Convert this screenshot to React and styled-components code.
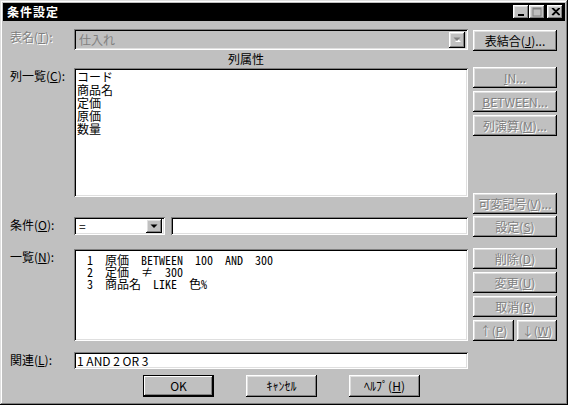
import React from "react";
import styled, { createGlobalStyle } from "styled-components";

const GlobalStyle = createGlobalStyle`
  html, body {
    margin: 0;
    padding: 0;
    background: #ffffff;
  }
  body {
    font-family: "Noto Sans CJK JP", "Noto Sans", sans-serif;
    font-size: 12px;
    color: #000;
  }
`;

const raised = `
  box-shadow: inset -1px -1px #000000, inset 1px 1px #ffffff,
    inset -2px -2px #808080, inset 2px 2px #dfdfdf;
`;

const sunken = `
  box-shadow: inset 1px 1px #808080, inset -1px -1px #ffffff,
    inset 2px 2px #000000, inset -2px -2px #dfdfdf;
`;

function TitleIcon({ kind }) {
  if (kind === "min") {
    return (
      <svg width="8" height="8" viewBox="0 0 8 8">
        <rect x="1" y="6" width="6" height="2" fill="#000" />
      </svg>
    );
  }
  if (kind === "max") {
    return (
      <svg width="10" height="10" viewBox="0 0 10 10">
        <rect x="1" y="1" width="8" height="8" fill="none" stroke="#808080" strokeWidth="1" />
        <rect x="1" y="1" width="8" height="1.5" fill="#808080" />
        <path d="M2 10.5 H10.5 V2" fill="none" stroke="#fff" strokeWidth="1" />
      </svg>
    );
  }
  return (
    <svg width="9" height="8" viewBox="0 0 9 8">
      <path d="M1 0 L8 7 M2 0 L9 7 M8 0 L1 7 M9 0 L2 7" stroke="#000" strokeWidth="1.2" />
    </svg>
  );
}

function Arrow({ disabled }) {
  return (
    <svg width="8" height="5" viewBox="0 0 8 5">
      {disabled && <path d="M2 5 L5 2 L8 5 Z" fill="#fff" />}
      <path d="M0.5 0.5 H7.5 L4 4 Z" fill={disabled ? "#808080" : "#000"} />
    </svg>
  );
}

export default function App() {
  return (
    <>
      <GlobalStyle />
      <Window>
        <TitleBar>
          <Title>条件設定</Title>
          <TitleButton>
            <TitleIcon kind="min" />
          </TitleButton>
          <TitleButton>
            <TitleIcon kind="max" />
          </TitleButton>
          <TitleButton $gap={2}>
            <TitleIcon kind="close" />
          </TitleButton>
        </TitleBar>

        <Body>
          <LeftColumn>
            <Row $h={21}>
              <Label $disabled>
                表名(<u>T</u>):
              </Label>
              <Combo $w={394} $disabled>
                <ComboText $disabled>仕入れ</ComboText>
                <DropButton $h={16}>
                  <Arrow disabled />
                </DropButton>
              </Combo>
            </Row>

            <Header>列属性</Header>

            <Row $h={129}>
              <Label>
                列一覧(<u>C</u>):
              </Label>
              <ListBox $w={394}>
                <ListLine>コード</ListLine>
                <ListLine>商品名</ListLine>
                <ListLine>定価</ListLine>
                <ListLine>原価</ListLine>
                <ListLine>数量</ListLine>
              </ListBox>
            </Row>

            <Row $h={18} $mt={20}>
              <Label>
                条件(<u>O</u>):
              </Label>
              <Combo $w={91}>
                <ComboText>=</ComboText>
                <DropButton $h={14}>
                  <Arrow />
                </DropButton>
              </Combo>
              <TextField $w={297} $ml={6} />
            </Row>

            <Row $h={92} $mt={14}>
              <Label>
                一覧(<u>N</u>):
              </Label>
              <ListBox $w={394}>
                <CondLine>{"1  原価  BETWEEN  100  AND  300"}</CondLine>
                <CondLine>{"2  定価  ≠  300"}</CondLine>
                <CondLine>{"3  商品名  LIKE  色%"}</CondLine>
              </ListBox>
            </Row>

            <Row $h={17} $mt={11}>
              <Label>
                関連(<u>L</u>):
              </Label>
              <TextField $w={394}>
                <FieldText>1 AND 2 OR 3</FieldText>
              </TextField>
            </Row>

            <ButtonRow>
              <DialogButton $default>OK</DialogButton>
              <DialogButton>ｷｬﾝｾﾙ</DialogButton>
              <DialogButton>
                ﾍﾙﾌﾟ(<u>H</u>)
              </DialogButton>
            </ButtonRow>
          </LeftColumn>

          <RightColumn>
            <SideButton $mt={1}>
              表結合(<u>J</u>)...
            </SideButton>
            <SideButton $mt={16} $disabled>
              <u>I</u>N...
            </SideButton>
            <SideButton $mt={3} $disabled>
              <u>B</u>ETWEEN...
            </SideButton>
            <SideButton $mt={3} $disabled>
              列演算(<u>M</u>)...
            </SideButton>
            <SideButton $mt={57} $disabled>
              可変記号(<u>V</u>)...
            </SideButton>
            <SideButton $mt={2} $disabled>
              設定(<u>S</u>)
            </SideButton>
            <SideButton $mt={11} $disabled>
              削除(<u>D</u>)
            </SideButton>
            <SideButton $mt={3} $disabled>
              変更(<u>U</u>)
            </SideButton>
            <SideButton $mt={3} $disabled>
              取消(<u>R</u>)
            </SideButton>
            <ArrowRow>
              <SideButton $w={41} $disabled>
                ↑(<u>P</u>)
              </SideButton>
              <SideButton $w={40} $disabled>
                ↓(<u>W</u>)
              </SideButton>
            </ArrowRow>
          </RightColumn>
        </Body>
      </Window>
    </>
  );
}

const Window = styled.div`
  width: 568px;
  height: 405px;
  box-sizing: border-box;
  padding: 3px;
  background: #c0c0c0;
  box-shadow: inset -1px -1px #000000, inset 1px 1px #dfdfdf,
    inset -2px -2px #808080, inset 2px 2px #ffffff;
  display: flex;
  flex-direction: column;
`;

const TitleBar = styled.div`
  height: 18px;
  background: #000000;
  display: flex;
  align-items: center;
  padding: 0 2px 0 4px;
`;

const Title = styled.span`
  flex: 1;
  color: #ffffff;
  font-size: 12px;
  font-weight: bold;
  line-height: 18px;
  letter-spacing: 1px;
`;

const TitleButton = styled.div`
  width: 16px;
  height: 14px;
  margin-left: ${(p) => p.$gap || 0}px;
  background: #c0c0c0;
  ${raised}
  display: flex;
  align-items: center;
  justify-content: center;
`;

const Body = styled.div`
  display: flex;
  padding: 8px 0 0 7px;
`;

const LeftColumn = styled.div`
  display: flex;
  flex-direction: column;
  width: 458px;
`;

const RightColumn = styled.div`
  display: flex;
  flex-direction: column;
  width: 84px;
  margin-left: 5px;
`;

const Row = styled.div`
  display: flex;
  align-items: flex-start;
  height: ${(p) => p.$h}px;
  margin-top: ${(p) => p.$mt || 0}px;
`;

const Label = styled.div`
  width: 64px;
  flex: none;
  padding-top: 1px;
  line-height: 14px;
  white-space: nowrap;
  color: ${(p) => (p.$disabled ? "#808080" : "#000")};
  text-shadow: ${(p) => (p.$disabled ? "1px 1px 0 #ffffff" : "none")};
`;

const Header = styled.div`
  height: 18px;
  padding-left: 218px;
  line-height: 18px;
`;

const Combo = styled.div`
  width: ${(p) => p.$w}px;
  height: 100%;
  box-sizing: border-box;
  padding: 2px;
  background: ${(p) => (p.$disabled ? "#c0c0c0" : "#ffffff")};
  ${sunken}
  display: flex;
  align-items: center;
`;

const ComboText = styled.div`
  flex: 1;
  padding-left: 3px;
  line-height: 14px;
  color: ${(p) => (p.$disabled ? "#808080" : "#000")};
`;

const DropButton = styled.div`
  width: 16px;
  height: ${(p) => p.$h}px;
  margin-right: 1px;
  background: #c0c0c0;
  ${raised}
  display: flex;
  align-items: center;
  justify-content: center;
`;

const TextField = styled.div`
  width: ${(p) => p.$w}px;
  height: 100%;
  margin-left: ${(p) => p.$ml || 0}px;
  box-sizing: border-box;
  padding: 2px;
  background: #ffffff;
  ${sunken}
`;

const FieldText = styled.div`
  line-height: 13px;
  padding-left: 1px;
`;

const ListBox = styled.div`
  width: ${(p) => p.$w}px;
  height: 100%;
  box-sizing: border-box;
  padding: 2px 2px 2px 3px;
  background: #ffffff;
  ${sunken}
  overflow: hidden;
`;

const ListLine = styled.div`
  line-height: 13px;
  white-space: nowrap;
`;

const CondLine = styled.div`
  font-family: "Noto Sans Mono CJK JP", "Liberation Mono", "Noto Sans CJK JP", monospace;
  font-size: 12px;
  line-height: 12px;
  padding-left: 10px;
  white-space: pre;
  &:first-child {
    margin-top: 3px;
  }
`;

const buttonBase = `
  box-sizing: border-box;
  height: 21px;
  background: #c0c0c0;
  display: flex;
  align-items: center;
  justify-content: center;
  white-space: nowrap;
  line-height: 14px;
`;

const SideButton = styled.div`
  ${buttonBase}
  width: ${(p) => p.$w || 84}px;
  margin-top: ${(p) => p.$mt || 0}px;
  ${raised}
  color: ${(p) => (p.$disabled ? "#808080" : "#000")};
  text-shadow: ${(p) => (p.$disabled ? "1px 1px 0 #ffffff" : "none")};
`;

const ArrowRow = styled.div`
  display: flex;
  justify-content: space-between;
  margin-top: 3px;
`;

const ButtonRow = styled.div`
  display: flex;
  gap: 32px;
  margin-top: 6px;
  padding-left: 133px;
`;

const DialogButton = styled.div`
  ${buttonBase}
  width: 71px;
  height: 22px;
  box-shadow: ${(p) =>
    p.$default
      ? "inset 0 0 0 1px #000, inset -2px -2px #000, inset 2px 2px #fff, inset -3px -3px #808080"
      : "inset -1px -1px #000, inset 1px 1px #fff, inset -2px -2px #808080, inset 2px 2px #dfdfdf"};
`;
